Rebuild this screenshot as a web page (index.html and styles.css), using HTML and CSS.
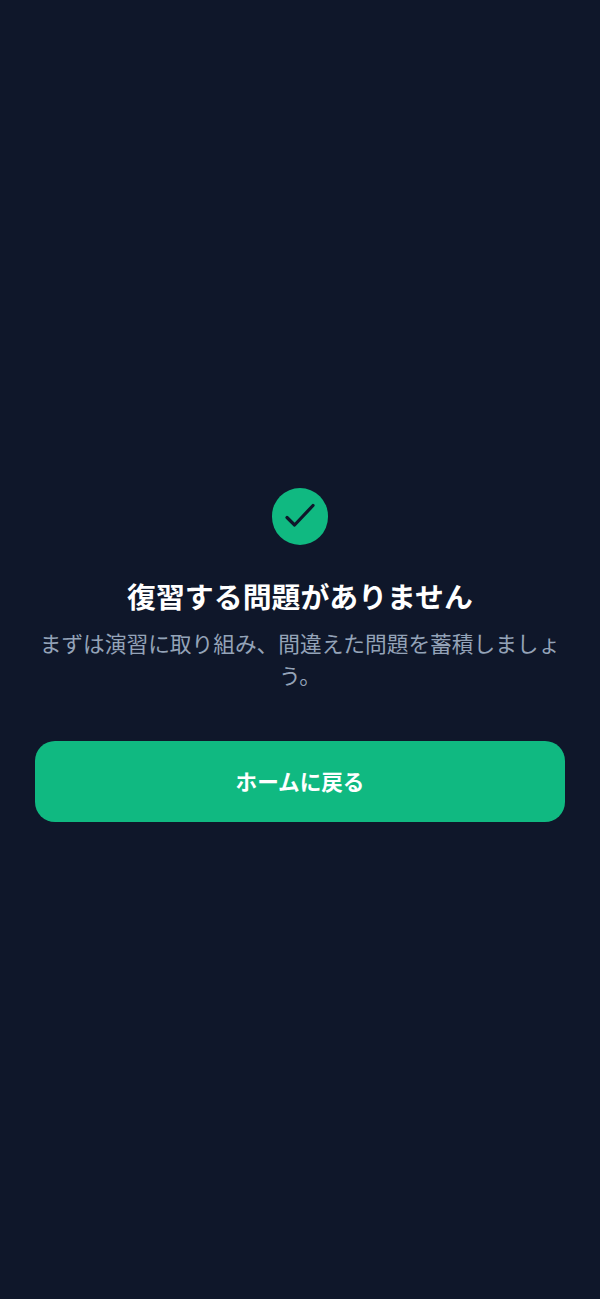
FILE: index.html
```html
<!DOCTYPE html>
<html lang="ja">
<head>
    <meta charset="UTF-8">
    <meta name="viewport" content="width=device-width, initial-scale=1.0">
    <title>復習</title>
    <link rel="stylesheet" href="styles.css">
</head>
<body>
    <main class="empty">
        <div class="check">
            <svg viewBox="0 0 40 40" width="40" height="40" fill="none" stroke="#0f172a" stroke-width="3.2" stroke-linecap="round" stroke-linejoin="round">
                <path d="M7 21.5l7.6 7.5L33 9.5"/>
            </svg>
        </div>
        <h1 class="title">復習する問題がありません</h1>
        <p class="message">まずは演習に取り組み、間違えた問題を蓄積しましょう。</p>
        <button class="home"><span class="home-label">ホームに戻る</span></button>
    </main>
</body>
</html>
```

FILE: styles.css
```css
body {
    margin: 0;
    height: 1299px;
    background-color: #0f172a;
    font-family: "Noto Sans CJK JP", "Inter", sans-serif;
    display: flex;
    justify-content: center;
    align-items: flex-start;
}

.empty {
    width: 100%;
    box-sizing: border-box;
    padding: 488px 35px 0;
    display: flex;
    flex-direction: column;
    align-items: center;
}

.check {
    width: 56.5px;
    height: 56.5px;
    border-radius: 50%;
    background-color: #10b981;
    display: flex;
    align-items: center;
    justify-content: center;
}

.title {
    margin: 29px 0 0;
    font-size: 28.9px;
    line-height: 43px;
    font-weight: 700;
    color: #ffffff;
    text-align: center;
}

.message {
    margin: 10.5px 0 0;
    font-size: 21.7px;
    line-height: 32.4px;
    color: #94a3b8;
    text-align: center;
    align-self: stretch;
}

.home {
    margin-top: 49px;
    width: 100%;
    height: 81px;
    padding: 0 0 2px;
    border: none;
    border-radius: 20px;
    background-color: #10b981;
    color: #ffffff;
    font-family: inherit;
    font-size: 21.6px;
    font-weight: 700;
}
```
